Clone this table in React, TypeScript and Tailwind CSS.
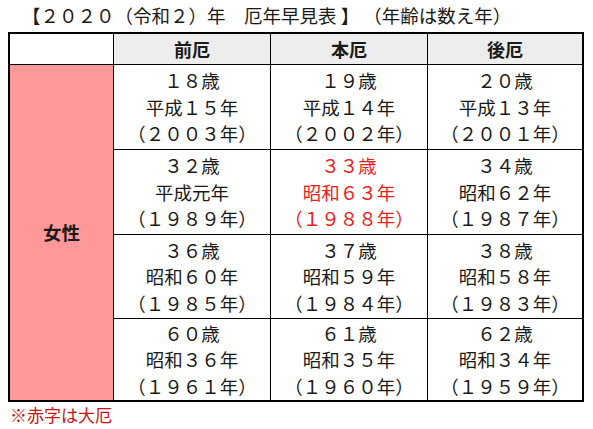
import React from 'react';

type Cell = { age: string; era: string; year: string; red?: boolean };

const rows: Cell[][] = [
  [
    { age: '１８歳', era: '平成１５年', year: '（２００３年）' },
    { age: '１９歳', era: '平成１４年', year: '（２００２年）' },
    { age: '２０歳', era: '平成１３年', year: '（２００１年）' },
  ],
  [
    { age: '３２歳', era: '平成元年', year: '（１９８９年）' },
    { age: '３３歳', era: '昭和６３年', year: '（１９８８年）', red: true },
    { age: '３４歳', era: '昭和６２年', year: '（１９８７年）' },
  ],
  [
    { age: '３６歳', era: '昭和６０年', year: '（１９８５年）' },
    { age: '３７歳', era: '昭和５９年', year: '（１９８４年）' },
    { age: '３８歳', era: '昭和５８年', year: '（１９８３年）' },
  ],
  [
    { age: '６０歳', era: '昭和３６年', year: '（１９６１年）' },
    { age: '６１歳', era: '昭和３５年', year: '（１９６０年）' },
    { age: '６２歳', era: '昭和３４年', year: '（１９５９年）' },
  ],
];

const headers = ['前厄', '本厄', '後厄'];

const App: React.FC = () => {
  return (
    <div
      className="w-[593px] h-[429px] bg-white text-[#1a1a1a] overflow-hidden"
      style={{ fontFamily: '"Noto Sans CJK JP", "Noto Sans", sans-serif' }}
    >
      {/* Title */}
      <div className="h-[32px] pl-[22px] pt-[2px] text-[18.5px] leading-[27px] whitespace-pre">
        【２０２０（令和２）年　厄年早見表 】 （年齢は数え年）
      </div>

      {/* Table */}
      <div className="ml-[8px] w-[576px] border-2 border-black bg-black">
        <div className="grid grid-cols-[103px_156px_156px_154px] grid-rows-[30px_84px_84px_83px_81px] gap-px">
          <div className="bg-white" />
          {headers.map((h) => (
            <div key={h} className="bg-[#ededed] flex items-center justify-center font-bold text-[18px]">
              {h}
            </div>
          ))}

          <div className="row-span-4 col-start-1 row-start-2 bg-[#ff9999] flex items-center justify-center font-bold text-[18.5px]">
            女性
          </div>

          {rows.map((row, ri) =>
            row.map((c, ci) => (
              <div
                key={`${ri}-${ci}`}
                className={`bg-white flex flex-col items-center justify-center text-[18.5px] leading-[26.5px] ${
                  c.red ? 'text-[#ee1c1c]' : ''
                }`}
              >
                <span>{c.age}</span>
                <span>{c.era}</span>
                <span>{c.year}</span>
              </div>
            ))
          )}
        </div>
      </div>

      {/* Note */}
      <div className="pl-[10px] pt-[2px] text-[17px] leading-[22px] text-[#cc1111]">※赤字は大厄</div>
    </div>
  );
};

export default App;
